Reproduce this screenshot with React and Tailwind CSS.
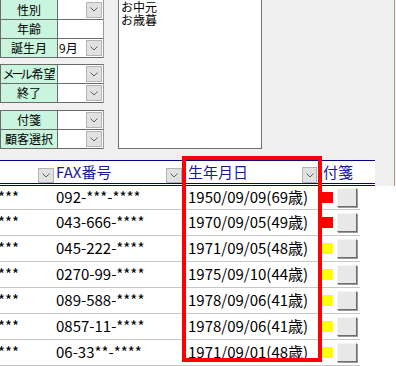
const JP = "font-['Noto_Sans_CJK_JP','Noto_Sans_CJK_SC',sans-serif]"

function Chevron() {
  return (
    <svg width="8" height="5" viewBox="0 0 8 5">
      <polyline points="0.5,0.5 4,4 7.5,0.5" fill="none" stroke="#606060" strokeWidth="1" />
    </svg>
  )
}

function DropBtn({ className = '' }) {
  return (
    <div className={`flex items-center justify-center bg-[#e1e1e1] border border-[#b4b4b4] ${className}`}>
      <Chevron />
    </div>
  )
}

function FormRow({ label, value, drop = true, first = false, labelClass = '' }) {
  return (
    <div className={`flex border-b border-[#6b6b6b] ${first ? 'h-[20px]' : 'h-[19px]'}`}>
      <div className={`w-[57px] shrink-0 bg-[#c9f5de] border-r border-[#6b6b6b] flex items-center justify-center text-[12px] text-black ${labelClass}`}>
        {label}
      </div>
      <div className="flex-1 bg-white flex items-center justify-between">
        <span className="text-[12px] pl-[1px] leading-none">{value}</span>
        {drop && <DropBtn className="w-[16px] h-[16px] mr-[1px]" />}
      </div>
    </div>
  )
}

const ROWS = [
  { fax: '092-***-****', birth: '1950/09/09(69歳)', tag: 'bg-[#ff0000]' },
  { fax: '043-666-****', birth: '1970/09/05(49歳)', tag: 'bg-[#ff0000]' },
  { fax: '045-222-****', birth: '1971/09/05(48歳)', tag: 'bg-[#ffff00]' },
  { fax: '0270-99-****', birth: '1975/09/10(44歳)', tag: 'bg-[#ffff00]' },
  { fax: '089-588-****', birth: '1978/09/06(41歳)', tag: 'bg-[#ffff00]' },
  { fax: '0857-11-****', birth: '1978/09/06(41歳)', tag: 'bg-[#ffff00]' },
  { fax: '06-33**-****', birth: '1971/09/01(48歳)', tag: 'bg-[#ffff00]' },
]

export default function App() {
  return (
    <div className={`relative w-[396px] h-[366px] overflow-hidden bg-[#f0f0f0] text-black ${JP}`}>
      {/* top: search form + memo */}
      <div className="flex h-[160px]">
        <div className="w-[104px] shrink-0">
          <div className="border-l border-r border-l-[#6b6b6b] border-r-[#9a9a9a]">
            <FormRow label="性別" first />
            <FormRow label="年齢" drop={false} />
            <FormRow label="誕生月" value="9月" />
          </div>
          <div className="mt-[6px] border border-[#6b6b6b] border-r-[#9a9a9a] border-b-0">
            <FormRow label={<><span className="tracking-[-3px]">メール</span><span className="ml-[2px]">希望</span></>} />
            <FormRow label="終了" />
          </div>
          <div className="mt-[7px] border border-[#6b6b6b] border-r-[#9a9a9a] border-b-0">
            <FormRow label="付箋" />
            <FormRow label="顧客選択" />
          </div>
        </div>
        <div className="ml-[14px] w-[144px] h-[149px] bg-white border border-t-0 border-[#6e6e6e] pl-[2px] text-[12px] leading-[13px]">
          <div>お中元</div>
          <div>お歳暮</div>
        </div>
        <div className="flex-1" />
        <div className="w-px bg-[#b89494] mr-px" />
      </div>

      {/* table header */}
      <div className="flex h-[26px]">
        <div className="w-[375px] flex bg-white border-t border-t-[#000080] border-b-[3px] border-double border-b-[#000080] text-[15px] text-[#1818a0]">
          <div className="w-[56px] flex justify-end items-end pr-[2px]">
            <DropBtn className="w-[16px] h-[15px]" />
          </div>
          <div className="w-[128px] flex justify-between">
            <span className="self-center leading-none pb-[1px]">FAX番号</span>
            <DropBtn className="w-[16px] h-[15px] self-end mr-[2px]" />
          </div>
          <div className="w-[136px] flex justify-between pl-[4px]">
            <span className="self-center leading-none pb-[1px]">生年月日</span>
            <DropBtn className="w-[15px] h-[16px] self-end mr-[3px]" />
          </div>
          <div className="flex-1 flex pl-[3px]">
            <span className="self-center leading-none pb-[1px]">付箋</span>
          </div>
        </div>
        <div className="flex-1" />
        <div className="w-px bg-[#b89494] mr-px" />
      </div>

      {/* table rows */}
      <div className="bg-white h-[180px] text-[15px]">
        {ROWS.map((r, i) => (
          <div key={i} className={`w-[360px] flex items-center border-b border-[#c8c8c8] ${i === 0 ? 'h-[24px]' : 'h-[26px]'}`}>
            <div className="w-[56px] overflow-hidden whitespace-nowrap">
              <span className="-ml-[9px]">****</span>
            </div>
            <div className="w-[128px] whitespace-nowrap">{r.fax}</div>
            <div className="w-[136px] pl-[4px] whitespace-nowrap">{r.birth}</div>
            <div className="flex-1 flex items-center">
              <div className={`w-[13px] h-[11px] ${r.tag}`} />
              <div className="ml-[4px] w-[20px] h-[19px] bg-[#e8e8e8] border border-t-[#f4f4f4] border-l-[#f4f4f4] border-r-[#6d6d6d] border-b-[#6d6d6d] shadow-[1px_1px_0_#9a9a9a]" />
            </div>
          </div>
        ))}
      </div>

      {/* highlight box */}
      <div className="absolute left-[182px] top-[156px] w-[140px] h-[206px] border-4 border-[#ff0000]" />
    </div>
  )
}
